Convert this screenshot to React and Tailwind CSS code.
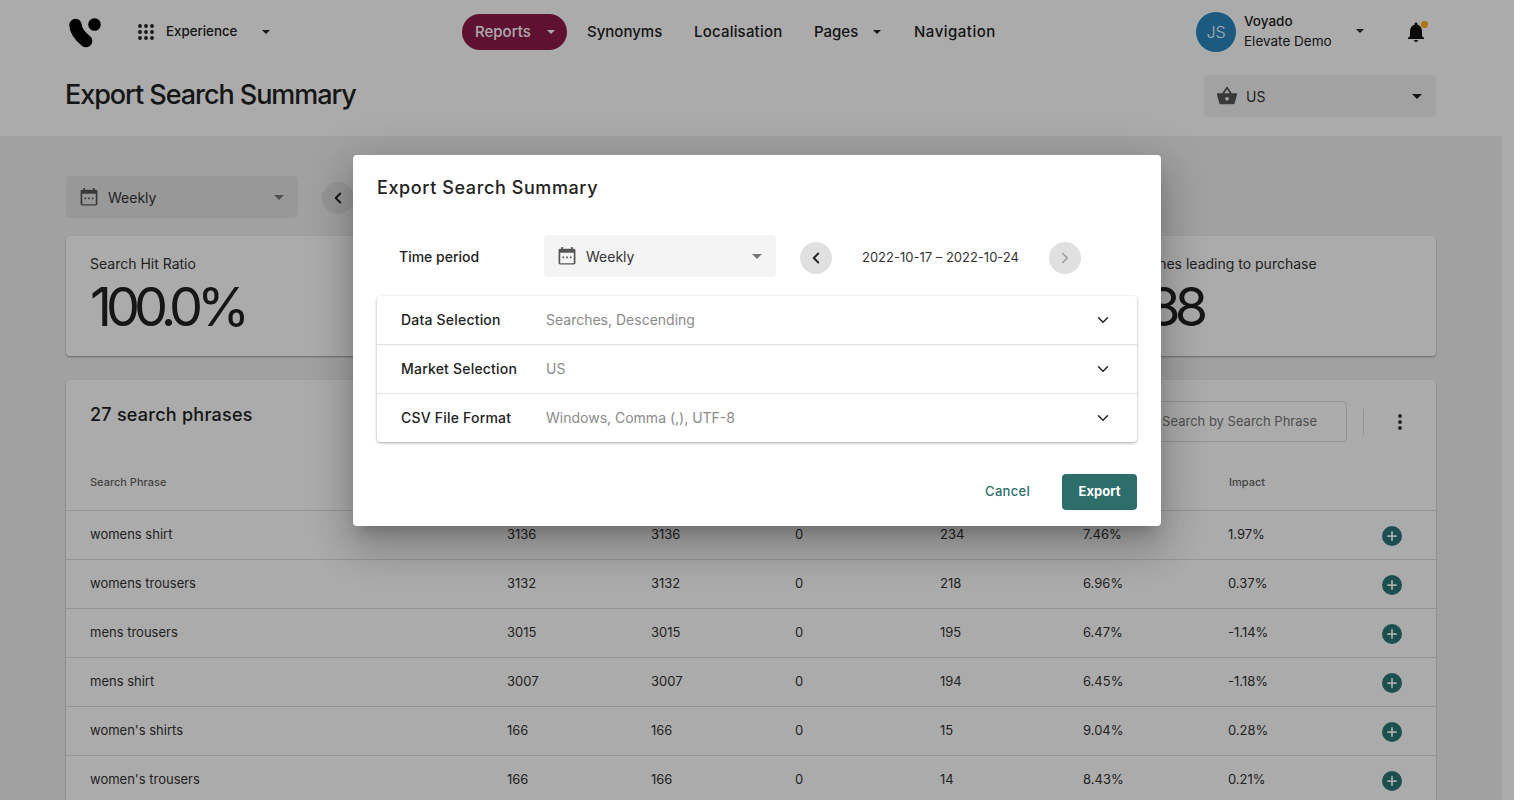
import React from "react";
import { ChevronDown, ChevronLeft, ChevronRight, Plus } from "lucide-react";

const rows = [
  ["womens shirt", "3136", "3136", "0", "234", "7.46%", "1.97%"],
  ["womens trousers", "3132", "3132", "0", "218", "6.96%", "0.37%"],
  ["mens trousers", "3015", "3015", "0", "195", "6.47%", "-1.14%"],
  ["mens shirt", "3007", "3007", "0", "194", "6.45%", "-1.18%"],
  ["women's shirts", "166", "166", "0", "15", "9.04%", "0.28%"],
  ["women's trousers", "166", "166", "0", "14", "8.43%", "0.21%"],
];

const tableCols = "grid grid-cols-[417px_144px_144px_145px_143px_145px_1fr] pl-6 items-center";

function Caret({ className }) {
  return (
    <svg viewBox="0 0 10 5" className={className} fill="currentColor">
      <path d="M0 0h10L5 5z" />
    </svg>
  );
}

function CalendarIcon() {
  return (
    <svg viewBox="0 0 16 16" className="w-[18px] h-[18px] text-[#555]" fill="currentColor">
      <path d="M3 0h1.500v1.500h7V0H13v1.500h1.200c.7 0 1.300.6 1.300 1.300v11.400c0 .7-.6 1.300-1.300 1.300H1.800c-.7 0-1.300-.6-1.300-1.300V2.800c0-.7.6-1.300 1.300-1.300H3zM2 5v9.500h12V5z" />
      <path d="M4 8.500h1.500V10H4zM7.250 8.500h1.500V10h-1.500zM10.500 8.500H12V10h-1.500z" />
    </svg>
  );
}

function Logo() {
  return (
    <svg viewBox="0 0 34 30" className="w-[34px] h-[30px] text-black">
      <path
        d="M6.500 7 C7 14 12 19 17 23"
        fill="none"
        stroke="currentColor"
        strokeWidth="12.500"
        strokeLinecap="round"
      />
      <circle cx="25.500" cy="6.500" r="6.300" fill="currentColor" />
    </svg>
  );
}

function GridIcon() {
  const dots = [];
  for (let y = 0; y < 3; y++) {
    for (let x = 0; x < 3; x++) {
      dots.push(<circle key={x + "-" + y} cx={2 + x * 6} cy={2 + y * 6} r="1.900" />);
    }
  }
  return (
    <svg viewBox="0 0 16 16" className="w-4 h-4 text-[#222]" fill="currentColor">
      {dots}
    </svg>
  );
}

function Select({ icon, label, bg, caretColor }) {
  return (
    <div className={"w-[232px] h-[42px] rounded flex items-center pl-[14px] pr-[14px] " + bg}>
      {icon}
      <span className="ml-[10px] text-sm text-[#333] flex-1 pt-[2px]">{label}</span>
      <Caret className={"w-[10px] h-[5px] " + caretColor} />
    </div>
  );
}

function RoundButton({ children }) {
  return (
    <div className="w-8 h-8 rounded-full bg-[#e0e0e0] flex items-center justify-center shrink-0">
      {children}
    </div>
  );
}

function Header() {
  return (
    <div className="h-[136px] bg-white pl-[66px] pr-[66px]">
      <div className="h-[64px] flex items-center relative">
        <div className="ml-[3px] mt-[2px]">
          <Logo />
        </div>
        <div className="ml-[35px] w-[133px] flex items-center">
          <GridIcon />
          <span className="ml-3 w-[96px] text-[13.3px] font-medium text-[#222]">Experience</span>
          <Caret className="w-2 h-1 text-[#222]" />
        </div>
        <div className="ml-[191px] flex items-center text-[15px] font-medium text-[#222]">
          <div className="w-[105px] h-9 rounded-full bg-[#8c1a4a] text-white flex items-center pl-[13px]">
            <span className="w-[72px]">Reports</span>
            <Caret className="w-2 h-1 text-white" />
          </div>
          <span className="ml-5 w-[75px]">Synonyms</span>
          <span className="ml-8 w-[88px] tracking-[0.2px]">Localisation</span>
          <span className="ml-8 w-[59px]">Pages</span>
          <Caret className="w-2 h-1 text-[#222]" />
          <span className="ml-[33px] tracking-[0.5px]">Navigation</span>
        </div>
        <div className="ml-auto flex items-center">
          <div className="w-10 h-10 rounded-full bg-[#2a86c2] text-white text-base font-light flex items-center justify-center">
            JS
          </div>
          <div className="ml-2 -mt-[2px] w-[112px] text-[13.5px] leading-5 text-[#222]">
            <div className="font-medium">Voyado</div>
            <div>Elevate Demo</div>
          </div>
          <Caret className="w-2 h-1 text-[#222] -mt-[2px]" />
          <div className="relative ml-[40px] mr-[8px]">
            <svg viewBox="0 0 24 24" className="w-6 h-6 text-[#111]" fill="currentColor">
              <path d="M12 22c1.100 0 2-.9 2-2h-4c0 1.100.89 2 2 2zm6-6v-5c0-3.070-1.640-5.640-4.500-6.320V4c0-.83-.67-1.500-1.500-1.500s-1.500.67-1.500 1.500v.68C7.630 5.360 6 7.920 6 11v5l-2 2v1h16v-1l-2-2z" />
            </svg>
            <span className="absolute top-[1px] right-0 w-[7px] h-[7px] rounded-full bg-[#ffb010]"></span>
          </div>
        </div>
      </div>
      <div className="flex items-center justify-between mt-[11px]">
        <h1 className="text-[27px] font-medium tracking-[-1.050px] text-[#222] leading-9 -mt-[3px] -ml-px">
          Export Search Summary
        </h1>
        <Select
          bg="bg-black/5"
          caretColor="text-[#222]"
          label="US"
          icon={
            <svg viewBox="0 0 24 24" className="w-[22px] h-[22px] -ml-[2px] -mr-[2px] text-[#555]" fill="currentColor">
              <path d="M17.210 9l-4.380-6.560c-.19-.28-.51-.42-.83-.42-.32 0-.64.14-.83.43L6.790 9H2c-.55 0-1 .45-1 1 0 .09.01.18.04.27l2.540 9.270c.23.84 1 1.460 1.920 1.460h13c.92 0 1.690-.62 1.930-1.460l2.540-9.270L23 10c0-.55-.45-1-1-1h-4.790zM9 9l3-4.400L15 9H9zm3 8c-1.100 0-2-.9-2-2s.9-2 2-2 2 .9 2 2-.9 2-2 2z" />
            </svg>
          }
        />
      </div>
    </div>
  );
}

function Stat({ label, value }) {
  return (
    <div className="h-[120px] bg-white rounded-sm shadow-[0_1px_2px_rgba(0,0,0,0.35)] pl-6 pt-[19px] overflow-hidden">
      <div className="text-sm text-[#333] leading-[18px] whitespace-nowrap">{label}</div>
      <div className="text-[54px] leading-[60px] tracking-[-6px] font-normal text-[#222] mt-[4px]">
        {value}
      </div>
    </div>
  );
}

function Table() {
  return (
    <div className="mt-6 bg-white rounded-t shadow-[0_1px_2px_rgba(0,0,0,0.35)]">
      <div className="h-[85px] flex items-start pl-6 pr-[34px]">
        <h2 className="mt-[23px] text-lg font-medium tracking-[0.25px] text-[#222] leading-6">27 search phrases</h2>
        <div className="ml-auto mt-[21px] flex items-center">
          <div className="w-[300px] h-[41px] pt-px border border-[#ddd] rounded flex items-center justify-end pr-[29px] text-[13px] text-[#777]">
            Search by Search Phrase
          </div>
          <div className="ml-4 w-px h-[26px] bg-[#ddd]"></div>
          <svg viewBox="0 0 4 16" className="ml-[34px] w-1 h-4 text-[#333]" fill="currentColor">
            <circle cx="2" cy="2" r="1.900" />
            <circle cx="2" cy="8" r="1.900" />
            <circle cx="2" cy="14" r="1.900" />
          </svg>
        </div>
      </div>
      <div className={tableCols + " h-[46px] pb-[10px] text-[11px] font-medium text-[#666] border-b border-[#ddd]"}>
        <span>Search Phrase</span>
        <span>Searches</span>
        <span>Hits</span>
        <span>No hits</span>
        <span>Purchases</span>
        <span>Conversion</span>
        <span className="pl-px">Impact</span>
      </div>
      {rows.map((r) => (
        <div key={r[0]} className={tableCols + " h-[49px] text-[13px] text-[#333] border-b border-[#ddd]"}>
          {r.slice(0, 6).map((c, i) => (
            <span key={i}>{c}</span>
          ))}
          <div className="flex items-center justify-between pr-[34px]">
            <span>{r[6]}</span>
            <div className="w-5 h-5 mt-[1px] rounded-full bg-[#2b7878] flex items-center justify-center">
              <Plus className="w-[14px] h-[14px] text-white" strokeWidth={3} />
            </div>
          </div>
        </div>
      ))}
    </div>
  );
}

function Accordion({ label, value, last }) {
  return (
    <div className={"flex items-center pl-6 pr-[25px] " + (last ? "h-[48px]" : "h-[49px] border-b border-[#e0e0e0]")}>
      <span className="w-[145px] text-sm font-medium tracking-[0.2px] text-[#222]">{label}</span>
      <span className="text-sm text-[#8a8a8a]">{value}</span>
      <ChevronDown className="ml-auto w-[18px] h-[18px] text-[#222]" strokeWidth={2} />
    </div>
  );
}

function Modal() {
  return (
    <div className="absolute inset-0 bg-black/33 flex justify-center items-start pt-[155px]">
      <div className="w-[808px] h-[371px] bg-white rounded-sm shadow-[0_11px_15px_-7px_rgba(0,0,0,0.2),0_24px_38px_3px_rgba(0,0,0,0.14),0_9px_46px_8px_rgba(0,0,0,0.12)] px-6 pt-[21px]">
        <h2 className="text-lg font-medium tracking-[0.6px] text-[#222] leading-6">Export Search Summary</h2>
        <div className="mt-[35px] flex items-center">
          <span className="ml-[22px] w-[145px] pt-px text-sm font-medium text-[#222]">Time period</span>
          <Select bg="bg-[#f4f4f4]" caretColor="text-[#777]" label="Weekly" icon={<CalendarIcon />} />
          <div className="ml-6 mt-[4px] flex items-center">
            <RoundButton>
              <ChevronLeft className="w-[18px] h-[18px] text-[#222]" strokeWidth={2.500} />
            </RoundButton>
            <span className="w-[217px] text-center text-[13px] text-[#333]">2022-10-17 – 2022-10-24</span>
            <RoundButton>
              <ChevronRight className="w-[18px] h-[18px] text-[#999]" strokeWidth={2} />
            </RoundButton>
          </div>
        </div>
        <div className="mt-[19px] rounded shadow-[0_1px_3px_rgba(0,0,0,0.35)]">
          <Accordion label="Data Selection" value="Searches, Descending" />
          <Accordion label="Market Selection" value="US" />
          <Accordion label="CSV File Format" value="Windows, Comma (,), UTF-8" last />
        </div>
        <div className="mt-8 flex items-center justify-end">
          <span className="text-[13px] font-medium tracking-[0.3px] text-[#2d6e6b]">Cancel</span>
          <div className="ml-8 w-[75px] h-9 rounded bg-[#2d6e6b] text-white text-[13px] font-bold flex items-center justify-center">
            Export
          </div>
        </div>
      </div>
    </div>
  );
}

export default function App() {
  return (
    <div className="relative h-[800px] overflow-hidden bg-white font-['Inter',sans-serif]">
      <div className="w-[1502px]">
        <Header />
        <div className="bg-[#f0f0f0] px-[66px] pt-10 h-[664px]">
          <div className="flex items-center">
            <Select bg="bg-black/5" caretColor="text-[#777]" label="Weekly" icon={<CalendarIcon />} />
            <div className="ml-6 mt-[2px]">
              <RoundButton>
                <ChevronLeft className="w-[18px] h-[18px] text-[#222]" strokeWidth={2.500} />
              </RoundButton>
            </div>
          </div>
          <div className="mt-[18px] grid grid-cols-[1fr_1fr_1fr_340px] gap-4">
            <Stat label="Search Hit Ratio" value="100.0%" />
            <Stat label="Searches" value="27" />
            <Stat label="Purchases" value="1288" />
            <Stat label="Searches leading to purchase" value="388" />
          </div>
          <Table />
        </div>
      </div>
      <Modal />
    </div>
  );
}
